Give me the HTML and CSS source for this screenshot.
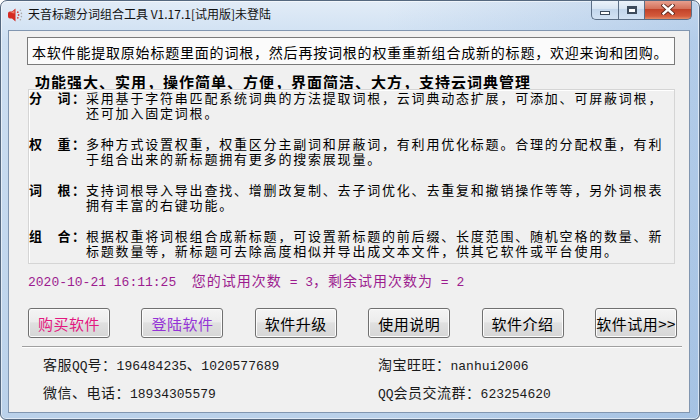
FILE: index.html
```html
<!DOCTYPE html>
<html>
<head>
	<meta charset="UTF-8">
	<title>天音标题分词组合工具</title>
	<link rel="stylesheet" href="styles.css">
</head>
<body>
	<div class="window">
		<div class="titlebar">
			<svg class="app-icon" viewBox="0 0 16 16" width="16" height="16">
				<path d="M1 6.5 Q1 4.5 3 4.5 L5 4.5 L8.5 1.5 L8.5 14.5 L5 11.5 L3 11.5 Q1 11.5 1 9.5 Z" fill="#d52a22"/>
				<path d="M2 5.5 L4.5 5.5 L7.5 3.2 L7.5 6.5 Z" fill="#f07a6a"/>
				<circle cx="10.8" cy="5.2" r="0.9" fill="#c44"/>
				<circle cx="11.6" cy="8" r="0.9" fill="#c44"/>
				<circle cx="10.8" cy="10.8" r="0.9" fill="#c44"/>
				<circle cx="13.4" cy="3.2" r="0.8" fill="#aaa"/>
				<circle cx="14.4" cy="6.4" r="0.8" fill="#aaa"/>
				<circle cx="14.4" cy="9.6" r="0.8" fill="#aaa"/>
				<circle cx="13.4" cy="12.8" r="0.8" fill="#aaa"/>
			</svg>
			<span class="title">天音标题分词组合工具 V1.17.1[试用版]未登陆</span>
			<div class="caption">
				<span class="cbtn min"><i class="min-glyph"></i></span>
				<span class="cbtn max"><i class="max-glyph"></i></span>
				<span class="cbtn close">
					<svg viewBox="0 0 14 11" width="14" height="11">
						<path d="M2.5 1.5 L11.5 9.5 M11.5 1.5 L2.5 9.5" stroke="#5b2419" stroke-width="4.2" stroke-linecap="square"/>
						<path d="M2.5 1.5 L11.5 9.5 M11.5 1.5 L2.5 9.5" stroke="#fff" stroke-width="2.4" stroke-linecap="square"/>
					</svg>
				</span>
			</div>
		</div>
		<div class="client">
			<div class="notice">本软件能提取原始标题里面的词根，然后再按词根的权重重新组合成新的标题，欢迎来询和团购。</div>
			<div class="heading">功能强大、实用，操作简单、方便，界面简洁、大方，支持云词典管理</div>
			<div class="group">
				<div class="row">
					<span class="label">分　词：</span>
					<span class="text">采用基于字符串匹配系统词典的方法提取词根，云词典动态扩展，可添加、可屏蔽词根，<br>还可加入固定词根。</span>
				</div>
				<div class="row">
					<span class="label">权　重：</span>
					<span class="text">多种方式设置权重，权重区分主副词和屏蔽词，有利用优化标题。合理的分配权重，有利<br>于组合出来的新标题拥有更多的搜索展现量。</span>
				</div>
				<div class="row">
					<span class="label">词　根：</span>
					<span class="text">支持词根导入导出查找、增删改复制、去子词优化、去重复和撤销操作等等，另外词根表<br>拥有丰富的右键功能。</span>
				</div>
				<div class="row">
					<span class="label">组　合：</span>
					<span class="text">根据权重将词根组合成新标题，可设置新标题的前后缀、长度范围、随机空格的数量、新<br>标题数量等，新标题可去除高度相似并导出成文本文件，供其它软件或平台使用。</span>
				</div>
			</div>
			<div class="status"><span class="num">2020-10-21 16:11:25  </span>您的试用次数<span class="num"> = 3</span>，剩余试用次数为<span class="num"> = 2</span></div>
			<div class="buttons">
				<button class="btn buy">购买软件</button>
				<button class="btn login">登陆软件</button>
				<button class="btn">软件升级</button>
				<button class="btn">使用说明</button>
				<button class="btn">软件介绍</button>
				<button class="btn">软件试用&gt;&gt;</button>
			</div>
			<div class="sep"></div>
			<div class="contact">
				<span>客服<span class="num">QQ</span>号：<span class="num">196484235</span>、<span class="num">1020577689</span></span>
				<span>淘宝旺旺：<span class="num">nanhui2006</span></span>
				<span>微信、电话：<span class="num">18934305579</span></span>
				<span><span class="num">QQ</span>会员交流群：<span class="num">623254620</span></span>
			</div>
		</div>
	</div>
</body>
</html>
```

FILE: styles.css
```css
* {
	box-sizing: border-box;
}
body {
	margin: 0;
	background: #fff;
	font-family: "Noto Sans CJK SC", sans-serif;
}
.window {
	width: 700px;
	height: 420px;
	border: 1px solid #55687f;
	border-radius: 7px 7px 6px 6px;
	background:
		linear-gradient(to right, rgba(255,255,255,0) 55%, rgba(110,155,210,.28) 100%),
		linear-gradient(#e2ecf7, #cddff2 40px, #bad1ea);
	box-shadow: inset 0 0 0 1px rgba(255,255,255,.55);
	display: flex;
	flex-direction: column;
	overflow: hidden;
}
.titlebar {
	height: 29px;
	flex: none;
	display: flex;
	align-items: flex-start;
}
.app-icon {
	margin: 6px 0 0 6px;
	flex: none;
}
.title {
	margin: 4px 0 0 5px;
	font-size: 12px;
	line-height: 18px;
	color: #111;
	white-space: nowrap;
}
.caption {
	margin: -1px 7px 0 auto;
	display: flex;
	height: 20px;
}
.cbtn {
	height: 20px;
	display: flex;
	align-items: center;
	justify-content: center;
	border: 1px solid #5b6e86;
	border-top: none;
	background: linear-gradient(#eef4fb, #d8e5f3 45%, #c3d6ec 50%, #d2e2f4);
}
.cbtn.min {
	width: 27px;
	border-right: none;
	border-radius: 0 0 0 5px;
}
.cbtn.max {
	width: 27px;
}
.cbtn.close {
	width: 47px;
	border-left: none;
	border-radius: 0 0 5px 0;
	background: linear-gradient(#e9a595, #d5725b 45%, #c2432a 50%, #d45a3c 85%, #e28c68);
}
.min-glyph {
	display: block;
	width: 10px;
	height: 4px;
	margin-top: 6px;
	border: 1px solid #3d4b5c;
	background: #fff;
}
.max-glyph {
	display: block;
	width: 10px;
	height: 8px;
	border: 1px solid #3d4b5c;
	border-top-width: 2px;
	background: #fff;
	box-shadow: inset 0 0 0 1px #3d4b5c, inset 0 0 0 2px #fff;
}
.client {
	flex: 1;
	margin: 0 9px 6px 7px;
	border: 1px solid #8196b0;
	background: #f0f0f0;
	display: flex;
	flex-direction: column;
	align-items: flex-start;
	color: #000;
}
.notice {
	margin: 6px 0 0 18px;
	width: 648px;
	height: 28px;
	border: 1px solid #7a7a7a;
	background: #fbfbfb;
	padding: 1px 0 0 4px;
	font-size: 14px;
	line-height: 26px;
	letter-spacing: .8px;
	white-space: nowrap;
}
.heading {
	margin: 9px 0 0 26px;
	font-size: 15px;
	font-weight: 700;
	line-height: 15px;
	letter-spacing: 1px;
	white-space: nowrap;
}
.group {
	margin-left: 19px;
	width: 647px;
	border: 1px solid #d5d5d5;
	box-shadow: inset 1px 1px 0 #fff;
	padding: 0 0 5px 0;
}
.row {
	display: flex;
	font-size: 13px;
	line-height: 15px;
	white-space: nowrap;
	margin-bottom: 16px;
}
.row:last-child {
	margin-bottom: 0;
}
.label {
	width: 57px;
	flex: none;
	font-weight: 700;
	letter-spacing: 1.3px;
}
.text {
	letter-spacing: 1.8px;
}
.num {
	font-family: "Liberation Mono", monospace;
	font-size: 13px;
	letter-spacing: 0;
}
.status {
	margin: 8px 0 0 19px;
	height: 16px;
	color: #9c1c8f;
	font-size: 14px;
	line-height: 16px;
	letter-spacing: 1px;
	white-space: pre;
}
.buttons {
	margin: 20px 0 0 19px;
	width: 649px;
	display: flex;
	justify-content: space-between;
}
.btn {
	width: 82px;
	height: 30px;
	padding: 0;
	border: 1px solid #707070;
	border-radius: 3px;
	background: linear-gradient(#f4f4f4, #ececec 45%, #e0e0e0 50%, #d6d6d6);
	box-shadow: inset 0 0 0 1px #fcfcfc;
	font-family: inherit;
	font-size: 15px;
	letter-spacing: .5px;
	color: #000;
	white-space: nowrap;
}
.btn.buy {
	color: #e3187f;
}
.btn.login {
	color: #9433d6;
}
.sep {
	margin: 8px 0 0 13px;
	width: 660px;
	border-top: 1px solid #a0a0a0;
	border-bottom: 1px solid #fff;
}
.contact {
	margin: 8px 0 0 34px;
	display: grid;
	grid-template-columns: 335px auto;
	grid-auto-rows: 16px;
	row-gap: 12px;
	font-size: 14px;
	line-height: 16px;
	letter-spacing: .5px;
	color: #1a1a1a;
	white-space: nowrap;
}
```
